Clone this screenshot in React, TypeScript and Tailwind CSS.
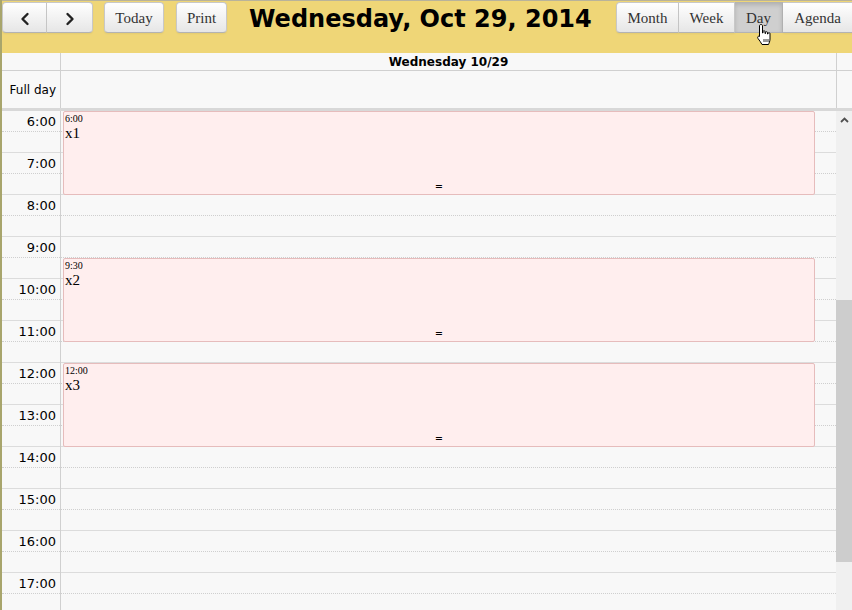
import React from "react";

const sans = { fontFamily: '"DejaVu Sans", Verdana, sans-serif' };
const serif = { fontFamily: '"Liberation Serif", "Times New Roman", serif' };

function Chevron({ dir }: { dir: "left" | "right" }) {
  return (
    <svg width="12" height="14" viewBox="0 0 12 14">
      {dir === "left" ? (
        <path d="M8.5 2 L3.5 7 L8.5 12" fill="none" stroke="#222" strokeWidth="2.4" strokeLinecap="round" strokeLinejoin="round" />
      ) : (
        <path d="M3.5 2 L8.5 7 L3.5 12" fill="none" stroke="#222" strokeWidth="2.4" strokeLinecap="round" strokeLinejoin="round" />
      )}
    </svg>
  );
}

const btn =
  "h-[31px] flex items-center justify-center pt-[2px] text-[15px] text-[#333] border border-[#c8c8c8] border-b-[#b3b3b3] bg-gradient-to-b from-white to-[#e6e6e6] shadow-[inset_0_1px_0_rgba(255,255,255,0.2),0_1px_2px_rgba(0,0,0,0.05)]";

const events = [
  { top: 0, time: "6:00", title: "x1" },
  { top: 147, time: "9:30", title: "x2" },
  { top: 252, time: "12:00", title: "x3" },
];

export default function App() {
  const hours = [6, 7, 8, 9, 10, 11, 12, 13, 14, 15, 16, 17];
  return (
    <div className="relative w-[852px] h-[610px] overflow-hidden border-l-2 border-[#a8a56c] bg-[#f8f8f8]">
      {/* toolbar */}
      <div className="h-[53px] bg-[#efd677] border-t border-[#b9b39a] flex items-start pt-[1px]" style={serif}>
        <div className="flex">
          <div className={btn + " w-[45px] rounded-l-[4px]"}>
            <Chevron dir="left" />
          </div>
          <div className={btn + " w-[46px] rounded-r-[4px] border-l-0"}>
            <Chevron dir="right" />
          </div>
        </div>
        <div className={btn + " w-[60px] rounded-[4px] ml-[11px]"}>Today</div>
        <div className={btn + " w-[51px] rounded-[4px] ml-[12px]"}>Print</div>
        <div className="ml-[22px] h-[34px] flex items-center text-[24px] font-bold text-black leading-none" style={sans}>
          Wednesday, Oct 29, 2014
        </div>
        <div className="ml-auto flex -mr-[1px]">
          <div className={btn + " w-[63px] rounded-l-[4px]"}>Month</div>
          <div className={btn + " w-[56px] border-l-0"}>Week</div>
          <div className="h-[31px] w-[48px] flex items-center justify-center pt-[2px] text-[15px] text-[#333] border border-l-0 border-[#b3b3b3] bg-[#cfcfcf] shadow-[inset_0_2px_4px_rgba(0,0,0,0.15)]">
            Day
          </div>
          <div className={btn + " w-[70px] border-l-0"}>Agenda</div>
        </div>
      </div>

      {/* header row */}
      <div className="flex h-[18px] border-b border-[#d0d0d0]" style={sans}>
        <div className="w-[59px] border-r border-[#d0d0d0]" />
        <div className="flex-1 border-r border-[#d0d0d0] flex items-center justify-center text-[12px] font-bold text-black">
          Wednesday 10/29
        </div>
        <div className="w-[15px]" />
      </div>

      {/* full day row */}
      <div className="flex h-[40px] border-b-[3px] border-[#d8d8d8]" style={sans}>
        <div className="w-[59px] border-r border-[#d0d0d0] flex items-center justify-end pr-[4px] text-[12px] text-black">
          Full day
        </div>
        <div className="flex-1 border-r border-[#d0d0d0]" />
        <div className="w-[15px]" />
      </div>

      {/* grid */}
      <div className="flex">
        <div className="w-[59px] border-r border-[#d0d0d0]" style={sans}>
          {hours.map((h) => (
            <div key={h}>
              <div className="h-[21px] border-b border-dotted border-[#cfcfcf] flex items-center justify-end pr-[4px] pt-[2px] text-[13px] text-black">
                {h}:00
              </div>
              <div className="h-[21px] border-b border-[#dcdcdc]" />
            </div>
          ))}
        </div>
        <div className="relative flex-1">
          {hours.map((h) => (
            <div key={h}>
              <div className="h-[21px] border-b border-dotted border-[#cfcfcf]" />
              <div className="h-[21px] border-b border-[#dcdcdc]" />
            </div>
          ))}
          {events.map((e) => (
            <div
              key={e.title}
              className="absolute left-[2px] w-[752px] h-[84px] bg-[#ffeeee] border border-[#e6bcbc] rounded-[2px] text-black"
              style={{ ...serif, top: e.top }}
            >
              <div className="text-[10px] leading-[11px] pl-[1px] pt-[1px]">{e.time}</div>
              <div className="text-[15px] leading-[16px] pl-[1px] pt-[1px]">{e.title}</div>
              <div className="absolute bottom-[1px] left-0 right-0 text-center text-[13px] leading-[12px] font-bold">=</div>
            </div>
          ))}
        </div>
        {/* scrollbar */}
        <div className="w-[16px] bg-[#f0f0f0] flex flex-col">
          <div className="h-[18px] flex items-center justify-center">
            <svg width="9" height="6" viewBox="0 0 9 6">
              <path d="M1 5 L4.5 1.5 L8 5" fill="none" stroke="#505050" strokeWidth="1.8" />
            </svg>
          </div>
          <div className="h-[171px]" />
          <div className="h-[262px] bg-[#cdcdcd]" />
        </div>
      </div>

      {/* mouse cursor */}
      <svg className="absolute left-[754px] top-[23px]" width="18" height="25" viewBox="0 0 18 25">
        <path
          d="M5 1.5 C6 1.5 6.5 2 6.5 3 L6.5 10 L7 10 L7 8.5 C7 7.5 9 7.5 9 8.5 L9 10.5 L9.5 10.5 L9.5 9.5 C9.5 8.5 11.5 8.5 11.5 9.5 L11.5 11 L12 11 L12 10.5 C12 9.5 14 9.5 14 10.5 L14 16 C14 18.5 13 20 12.5 21.5 L6 21.5 C5 19.5 3.5 17.5 2 15.5 C1 14 2.5 12.5 3.5 13.5 L3.5 13.5 L3.5 3 C3.5 2 4 1.5 5 1.5 Z"
          fill="white"
          stroke="black"
          strokeWidth="1"
        />
        <path d="M8 16 L8 19 M10 16 L10 19 M12 16 L12 19" stroke="black" strokeWidth="0.8" />
      </svg>
    </div>
  );
}
